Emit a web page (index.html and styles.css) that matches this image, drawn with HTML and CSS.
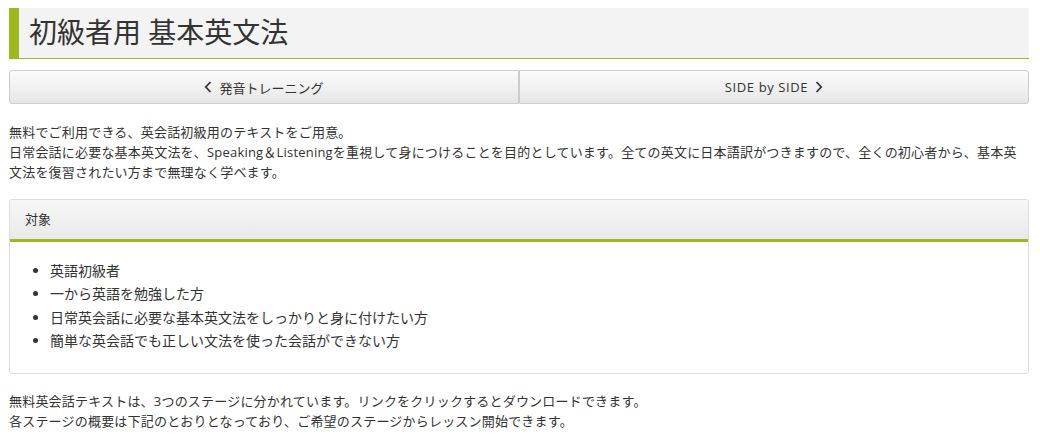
FILE: index.html
```html
<!DOCTYPE html>
<html lang="ja">
<head>
  <meta charset="UTF-8" />
  <meta name="viewport" content="width=device-width, initial-scale=1.0" />
  <title>初級者用 基本英文法</title>
  <link rel="stylesheet" href="styles.css">
</head>
<body>
  <div class="page">
    <h1 class="page-title">初級者用 基本英文法</h1>

    <nav class="pager">
      <a class="pager-btn" href="#">
        <svg class="chev" width="8" height="12" viewBox="0 0 8 12"><path d="M6.5 1 L1.8 6 L6.5 11" fill="none" stroke="#333" stroke-width="1.8"/></svg>
        発音トレーニング
      </a>
      <a class="pager-btn pager-latin" href="#">
        SIDE by SIDE
        <svg class="chev" width="8" height="12" viewBox="0 0 8 12"><path d="M1.5 1 L6.2 6 L1.5 11" fill="none" stroke="#333" stroke-width="1.8"/></svg>
      </a>
    </nav>

    <p class="lead">
      無料でご利用できる、英会話初級用のテキストをご用意。<br>
      日常会話に必要な基本英文法を、Speaking＆Listeningを重視して身につけることを目的としています。全ての英文に日本語訳がつきますので、全くの初心者から、基本英文法を復習されたい方まで無理なく学べます。
    </p>

    <section class="panel">
      <div class="panel-head">対象</div>
      <ul class="panel-list">
        <li>英語初級者</li>
        <li>一から英語を勉強した方</li>
        <li>日常英会話に必要な基本英文法をしっかりと身に付けたい方</li>
        <li>簡単な英会話でも正しい文法を使った会話ができない方</li>
      </ul>
    </section>

    <p class="lead">
      無料英会話テキストは、3つのステージに分かれています。リンクをクリックするとダウンロードできます。<br>
      各ステージの概要は下記のとおりとなっており、ご希望のステージからレッスン開始できます。
    </p>
  </div>
</body>
</html>
```

FILE: styles.css
```css
body {
  margin: 0;
  font-family: "Open Sans", "Noto Sans CJK JP", sans-serif;
  color: #333;
  background-color: #fff;
}
.page {
  width: 1020px;
  padding: 8px 11px 0 9px;
}
.page-title {
  margin: 0;
  height: 50px;
  line-height: 48px;
  padding-left: 10px;
  border-left: 10px solid #9fb81f;
  border-bottom: 1px solid #9fb81f;
  background-color: #f3f3f3;
  font-size: 28px;
  font-weight: normal;
  color: #333;
}
.pager {
  display: flex;
  margin-top: 11px;
}
.pager-btn {
  flex: 1;
  display: flex;
  align-items: center;
  justify-content: center;
  gap: 7px;
  height: 32px;
  border: 1px solid #ccc;
  background: linear-gradient(#fbfbfb, #e6e6e6);
  color: #333;
  font-size: 13px;
  text-decoration: none;
}
.pager-latin {
  letter-spacing: 0.6px;
}
.pager-btn:first-child {
  border-radius: 3px 0 0 3px;
}
.pager-btn:last-child {
  border-radius: 0 3px 3px 0;
}
.lead {
  margin: 18px 0 0;
  font-size: 13px;
  line-height: 20px;
  letter-spacing: 0.2px;
}
.panel {
  margin-top: 17px;
  border: 1px solid #ddd;
  border-radius: 3px;
  background-color: #fff;
}
.panel-head {
  height: 39px;
  line-height: 39px;
  padding-left: 15px;
  border-bottom: 3px solid #9fb81f;
  background: linear-gradient(#f7f7f7, #e9e9e9);
  font-size: 13px;
  border-radius: 3px 3px 0 0;
}
.panel-list {
  margin: 0;
  padding: 17px 0 20px 40px;
  font-size: 14px;
  line-height: 23.4px;
}
.panel + .lead {
  margin-top: 17px;
}
```
